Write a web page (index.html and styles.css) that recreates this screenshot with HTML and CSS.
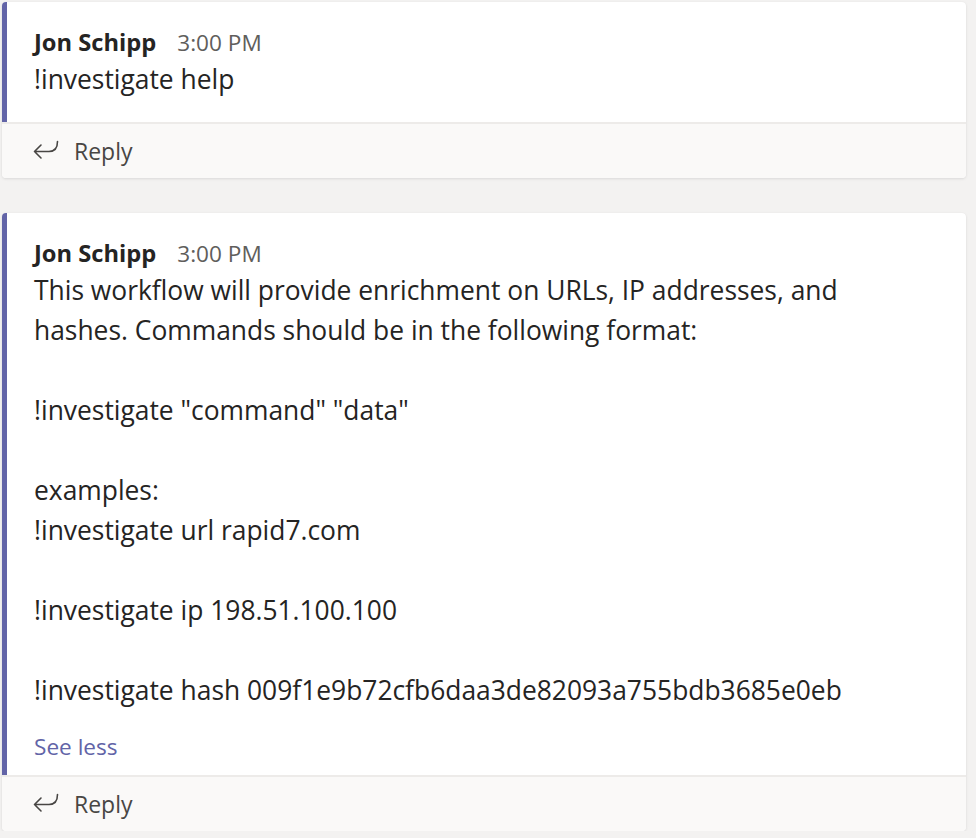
FILE: index.html
```html
<!DOCTYPE html>
<html>
<head>
<meta charset="utf-8">
<link rel="stylesheet" href="styles.css">
</head>
<body>
<div class="feed">
  <div class="card">
    <div class="msg">
      <div class="head"><span class="name">Jon Schipp</span><span class="time">3:00 PM</span></div>
      <div class="body"><p>!investigate help</p></div>
    </div>
    <div class="reply">
      <svg class="reply-icon" width="26" height="20" viewBox="0 0 26 20"><path d="M8 5 L1.5 11.5 L8 18 M1.5 11.5 H16 C21.5 11.5 24.5 8 24.5 1.5" fill="none" stroke="#484644" stroke-width="1.6" stroke-linecap="round" stroke-linejoin="round"/></svg>
      <span class="reply-text">Reply</span>
    </div>
  </div>
  <div class="card">
    <div class="msg">
      <div class="head"><span class="name">Jon Schipp</span><span class="time">3:00 PM</span></div>
      <div class="body">
        <p>This workflow will provide enrichment on URLs, IP addresses, and hashes. Commands should be in the following format:</p>
        <p class="blank">&nbsp;</p>
        <p>!investigate "command" "data"</p>
        <p class="blank">&nbsp;</p>
        <p>examples:</p>
        <p>!investigate url rapid7.com</p>
        <p class="blank">&nbsp;</p>
        <p>!investigate ip 198.51.100.100</p>
        <p class="blank">&nbsp;</p>
        <p>!investigate hash 009f1e9b72cfb6daa3de82093a755bdb3685e0eb</p>
      </div>
      <div class="see-less">See less</div>
    </div>
    <div class="reply">
      <svg class="reply-icon" width="26" height="20" viewBox="0 0 26 20"><path d="M8 5 L1.5 11.5 L8 18 M1.5 11.5 H16 C21.5 11.5 24.5 8 24.5 1.5" fill="none" stroke="#484644" stroke-width="1.6" stroke-linecap="round" stroke-linejoin="round"/></svg>
      <span class="reply-text">Reply</span>
    </div>
  </div>
</div>
</body>
</html>
```
FILE: styles.css
```css
html, body {
  margin: 0;
  padding: 0;
  background: #f3f2f1;
}
body {
  font-family: "Open Sans", "Noto Sans", sans-serif;
  color: #252423;
}
.feed {
  display: flex;
  flex-direction: column;
  gap: 35px;
  padding: 2px 0 0 2px;
  width: 964px;
}
.card {
  background: #ffffff;
  border-radius: 4px;
  box-shadow: 0 1px 3px rgba(0,0,0,0.10), 0 0 1px rgba(0,0,0,0.06);
  overflow: hidden;
}
.msg {
  border-left: 5px solid #6264a7;
  padding: 24px 60px 23px 27px;
}
.head {
  display: flex;
  align-items: baseline;
  gap: 21px;
  height: 33px;
  line-height: 33px;
}
.name {
  font-weight: 700;
  font-size: 23.7px;
  color: #252423;
}
.time {
  font-size: 22.6px;
  color: #605e5c;
}
.body {
  font-size: 26.4px;
  line-height: 40px;
}
.body p {
  margin: 0;
}
.see-less {
  margin-top: 17px;
  font-size: 22.6px;
  line-height: 40px;
  color: #6264a7;
  margin-bottom: -15px;
}
.reply {
  display: flex;
  align-items: center;
  gap: 15px;
  height: 54px;
  border-top: 2px solid #edebe9;
  background: #faf9f8;
  padding-left: 31px;
}
.reply-icon {
  display: block;
  margin-top: -2px;
}
.reply-text {
  font-size: 23px;
  color: #484644;
}
```
